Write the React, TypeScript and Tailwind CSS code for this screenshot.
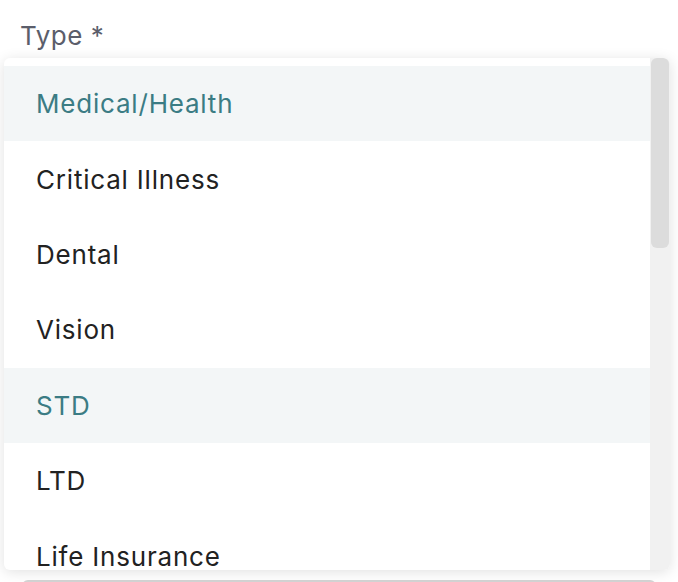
import React from "react";

const options = [
  { label: "Medical/Health", selected: true },
  { label: "Critical Illness", selected: false },
  { label: "Dental", selected: false },
  { label: "Vision", selected: false },
  { label: "STD", selected: true },
  { label: "LTD", selected: false },
  { label: "Life Insurance", selected: false },
];

const App: React.FC = () => {
  return (
    <div className="relative h-[582px] w-[678px] overflow-hidden bg-white font-['Inter',sans-serif]">
      <div className="px-5 pt-[20px]">
        <label className="text-[26px] leading-[32px] tracking-[0.5px] text-[#5b5e6b]">Type *</label>
      </div>
      <div className="mx-[22px] mt-[528px] h-[40px] rounded-md border-2 border-[#d4d4d4]" />

      <div className="absolute left-[4px] top-[58px] flex h-[512px] w-[666px] overflow-hidden rounded-[6px] bg-white shadow-[0_2px_14px_rgba(0,0,0,0.12)]">
        <ul className="flex-1 overflow-hidden pt-2">
          {options.map((o) => (
            <li
              key={o.label}
              className={`flex h-[75.4px] items-center pl-8 text-[26px] tracking-[0.8px] ${
                o.selected ? "bg-[#f3f6f7] text-[#3b7c84]" : "text-[#222222]"
              }`}
            >
              {o.label}
            </li>
          ))}
        </ul>
        <div className="w-[20px] bg-[#f1f1f1] px-[1px]">
          <div className="h-[190px] rounded-[6px] bg-[#dcdcdc]" />
        </div>
      </div>
    </div>
  );
};

export default App;
